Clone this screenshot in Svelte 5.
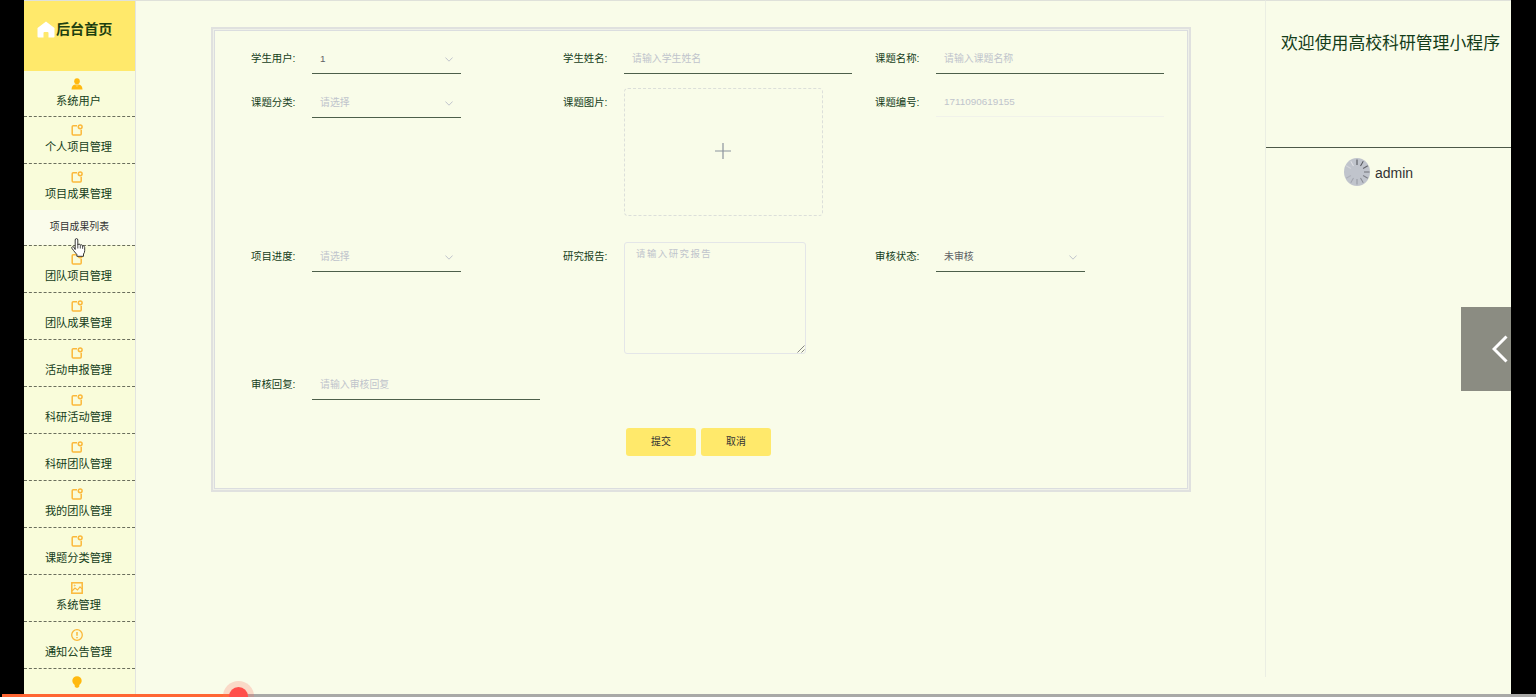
<script lang="ts">
  type MenuItem = { label: string; icon: string; children?: string[] };
  type Field = { label: string; kind: string; value?: string; hint?: string };

  const menu: MenuItem[] = [
    { label: '系统用户', icon: 'user' },
    { label: '个人项目管理', icon: 'note' },
    { label: '项目成果管理', icon: 'note', children: ['项目成果列表'] },
    { label: '团队项目管理', icon: 'note' },
    { label: '团队成果管理', icon: 'note' },
    { label: '活动申报管理', icon: 'note' },
    { label: '科研活动管理', icon: 'note' },
    { label: '科研团队管理', icon: 'note' },
    { label: '我的团队管理', icon: 'note' },
    { label: '课题分类管理', icon: 'note' },
    { label: '系统管理', icon: 'picture' },
    { label: '通知公告管理', icon: 'warning' },
    { label: '', icon: 'bulb' },
  ];

  const fields: Field[] = [
    { label: '学生用户', kind: 'select', value: '1' },
    { label: '学生姓名', kind: 'input', hint: '请输入学生姓名' },
    { label: '课题名称', kind: 'input', hint: '请输入课题名称' },
    { label: '课题分类', kind: 'select', hint: '请选择' },
    { label: '课题图片', kind: 'upload' },
    { label: '课题编号', kind: 'disabled', hint: '1711090619155' },
    { label: '项目进度', kind: 'select', hint: '请选择' },
    { label: '研究报告', kind: 'textarea', hint: '请输入研究报告' },
    { label: '审核状态', kind: 'select', value: '未审核' },
    { label: '审核回复', kind: 'input', hint: '请输入审核回复' },
  ];

  const spokes = [0, 30, 60, 90, 120, 150, 180, 210, 240, 300, 330];
  const spokeColors = ['#4b4d52', '#54565b', '#62646a', '#707279', '#7c7f86', '#888b93', '#9598a0', '#a1a4ad', '#adb0b9', '#d3d5da', '#dfe0e4'];
</script>

<div class="screen">
  <aside class="side">
    <div class="home">
      <svg class="house" viewBox="0 0 18 17"><path d="M9 .5 17.5 7v8.5q0 1-1 1h-5V12q0-1-1-1h-3q-1 0-1 1v4.500h-5q-1 0-1-1V7z" fill="#fff" /></svg>
      <span>后台首页</span>
    </div>
    {#each menu as item}
      <div class="item">
        <div class="head">
          <svg class="icon" viewBox="0 0 12 12" fill="none" stroke="#fbb83a" stroke-width="1.5">
            {#if item.icon === 'user'}
              <ellipse cx="6" cy="3.300" rx="2.800" ry="3" fill="#ffb90f" stroke="none" />
              <path d="M.5 11.500Q.7 7 4.200 6.500h3.600Q11.300 7 11.500 11.500z" fill="#ffb90f" stroke="none" />
              <path d="m5 7.200 1 1.300 1-1.300" stroke="#ffdc80" stroke-width=".7" />
            {:else if item.icon === 'note'}
              <path d="M6 1.800H2.200q-1 0-1 1V10q0 1 1 1h7q1 0 1-1V5.800" />
              <circle cx="9.200" cy="2.800" r="1.900" />
            {:else if item.icon === 'picture'}
              <rect x=".8" y=".8" width="10.400" height="10.400" />
              <path d="m1 9 3-3 2.500 2L9 4.800l2 2" stroke-width="1.200" />
              <circle cx="3.700" cy="3.500" r=".5" stroke-width="1" />
            {:else if item.icon === 'warning'}
              <circle cx="6" cy="6" r="5.300" stroke-width="1.300" />
              <path d="M6 3v3.800M6 8v1.300" />
            {:else}
              <path d="M6 .2a4.700 4.700 0 0 1 4.700 4.700Q10.700 7 8.300 9v1.400L7 11.800H5L3.700 10.400V9Q1.300 7 1.300 4.900A4.700 4.700 0 0 1 6 .2z" fill="#ffb90f" stroke="none" />
            {/if}
          </svg>
          <span>{item.label}</span>
        </div>
        {#each item.children ?? [] as child}
          <div class="child">{child}</div>
        {/each}
      </div>
    {/each}
  </aside>

  <main class="main">
    <form class="form">
      <div class="grid">
        {#each fields as f}
          <div class="field">
            <span class="label">{f.label}:</span>
            {#if f.kind === 'upload'}
              <div class="upload">
                <svg viewBox="0 0 16 16"><path d="M8 0v16M0 8h16" stroke="#8c939d" stroke-width="1.200" /></svg>
              </div>
            {:else if f.kind === 'textarea'}
              <div class="area">
                {f.hint}
                <svg class="grip" viewBox="0 0 8 8"><path d="M.5 7.500l7-7M4.500 7.500l3-3" stroke="#777" stroke-width=".9" /></svg>
              </div>
            {:else}
              <div class="control {f.kind}">
                <span class:hint={!f.value}>{f.value ?? f.hint}</span>
                {#if f.kind === 'select'}
                  <svg class="arrow" viewBox="0 0 8 5"><path d="m.4.5 3.600 3.700L7.600.5" fill="none" stroke="#c0c4cc" stroke-width="1" /></svg>
                {/if}
              </div>
            {/if}
          </div>
        {/each}
      </div>
      <div class="actions">
        <button type="button">提交</button>
        <button type="button">取消</button>
      </div>
    </form>
  </main>

  <aside class="right">
    <div class="welcome">欢迎使用高校科研管理小程序</div>
    <div class="account">
      <svg class="avatar" viewBox="0 0 26 28">
        <ellipse cx="13" cy="14" rx="13" ry="14" fill="#c0c4cc" />
        {#each spokes as angle, i}
          <path d="M13 1.500v5.500" transform="rotate({angle} 13 14)" stroke={spokeColors[i]} stroke-width="1" />
        {/each}
      </svg>
      <span>admin</span>
    </div>
  </aside>

  <div class="drawer">
    <svg viewBox="0 0 16 28"><path d="M14.500 1.500 2 14l12.500 12.500" fill="none" stroke="#fff" stroke-width="3" /></svg>
  </div>

  <svg class="pointer" viewBox="0 0 15 19">
    <path d="M4.200 11.500V2q0-1.400 1.300-1.400T6.800 2v5q.3-1 1.300-.9 1.100.1 1.200 1.200.4-.7 1.300-.5.900.3 1 1.300.5-.5 1.200-.1.900.5.900 1.600v3q0 2-1.200 3.400v2.300H5.900v-1.700L2.600 12.600.9 10.300q-.5-1 .4-1.500.8-.4 1.600.4z" fill="#fff" stroke="#222" stroke-width=".9" />
    <path d="M6.800 7v3.500M9.300 7.500v3M11.600 8v2.800" stroke="#222" stroke-width=".8" />
  </svg>

  <div class="progress">
    <div class="played"></div>
    <div class="knob"></div>
  </div>
</div>

<style>
  :global(body) { margin: 0; background: #000; }
  .screen {
    position: relative; display: flex; box-sizing: border-box;
    width: 1536px; height: 697px; padding: 0 25px 0 24px; overflow: hidden;
    background: #000; color: #143c19;
    font-family: "Liberation Sans", "Noto Sans CJK SC", sans-serif;
  }
  .side, .main { box-sizing: border-box; border-top: 1px solid #dfe1da; height: 697px; }
  .side { width: 112px; flex: none; background: #f9fcda; border-right: 1px solid #e2e4e0; overflow: hidden; }
  .home {
    display: flex; align-items: center; box-sizing: border-box;
    height: 69.500px; padding: 0 0 12px 13px; gap: 1px;
    background: #ffe96b; font-size: 14.100px; font-weight: 700; white-space: nowrap; color: #1d4010;
  }
  .home span { padding-bottom: 3px; }
  .house { width: 18px; height: 17px; }
  .item { box-sizing: border-box; border-bottom: 1px dashed #6a6e5c; }
  .head {
    display: flex; flex-direction: column; align-items: center; box-sizing: border-box;
    height: 45.970px; padding-top: 7px; font-size: 11.200px; line-height: 16px;
  }
  .head span { margin: 3px 2px 0 0; }
  .icon { width: 12px; height: 12px; margin-left: -6px; }
  .child {
    height: 35px; line-height: 33px; background: #fafceb;
    text-align: center; font-size: 9.900px; color: #333;
  }
  .main { flex: 1; background: #f9fce9; padding: 26px 0 0 75px; }
  .form {
    box-sizing: border-box; width: 980px; height: 465px;
    border: 2px solid #e0e1df; padding: 15px 0 0 38px;
    box-shadow: inset 0 0 0 1px #eff1e8, inset 0 0 0 2px #dbdddf;
  }
  .grid { display: grid; grid-template-columns: repeat(3, 312px); grid-template-rows: 44px 154px 127.500px 58.500px; }
  .field { display: flex; align-items: flex-start; }
  .label { width: 61px; flex: none; font-size: 10.400px; line-height: 29px; white-space: nowrap; }
  .control {
    display: flex; justify-content: space-between; align-items: center; box-sizing: border-box;
    width: 228px; height: 30px; padding: 0 8px 1px; border-bottom: 1px solid #4d5f4a;
    font-size: 9.900px; color: #606266;
  }
  .select { width: 149px; }
  .disabled { height: 29px; border-color: #f1f2ea; }
  .hint { color: #c0c4cc; }
  .arrow { width: 8px; height: 5px; margin-top: 3px; }
  .upload {
    display: flex; align-items: center; justify-content: center; box-sizing: border-box;
    width: 199px; height: 128px; padding: 0 2px 2px 0; border: 1px dashed #dcdfda; border-radius: 4px;
  }
  .upload svg { width: 16px; height: 16px; }
  .area {
    position: relative; box-sizing: border-box; width: 182px; height: 112px;
    border: 1px solid #e4e6e8; border-radius: 3px; padding: 3px 11px;
    font-size: 9.400px; line-height: 15px; letter-spacing: 1.500px; color: #c0c4cc;
  }
  .grip { position: absolute; right: 0; bottom: 0; width: 8px; height: 8px; }
  .actions { display: flex; gap: 5px; margin-left: 375px; }
  button {
    width: 70px; height: 28px; padding: 0 0 2px; border: 0; border-radius: 3px;
    background: #ffe96b; color: #333; font: 9.900px "Liberation Sans", "Noto Sans CJK SC", sans-serif;
  }
  .right {
    box-sizing: border-box; width: 246px; height: 677px; flex: none;
    background: #f9fce9; border-top: 1px solid #dfe1da; border-left: 1px solid #ebeee3;
    box-shadow: 0 20px 0 #f9fce9;
  }
  .welcome {
    box-sizing: border-box; height: 147px; padding: 30px 0 0 15px; border-bottom: 1px solid #4d5848;
    font-size: 16.850px; line-height: 25px; white-space: nowrap;
  }
  .account { display: flex; align-items: center; gap: 5px; padding: 10px 0 0 78px; font-size: 14px; color: #333; }
  .account span { padding-top: 2px; }
  .avatar { width: 26px; height: 28px; }
  .drawer {
    position: absolute; left: 1461px; top: 307px; width: 50px; height: 84px;
    display: flex; align-items: center; justify-content: flex-end;
    box-sizing: border-box; padding-right: 3px; background: #8b8c82;
  }
  .drawer svg { width: 16px; height: 28px; }
  .pointer { position: absolute; left: 71px; top: 238px; width: 15px; height: 19px; }
  .progress { position: absolute; left: 2px; right: 0; bottom: 0; height: 3px; background: #a9a9a7; }
  .played { width: 236px; height: 3px; background: #ff6633; }
  .knob {
    position: absolute; left: 227px; top: -7px; width: 19px; height: 19px; border-radius: 50%;
    background: #ff4f4b; box-shadow: 0 0 0 6px rgba(255, 110, 100, .25);
  }
</style>
